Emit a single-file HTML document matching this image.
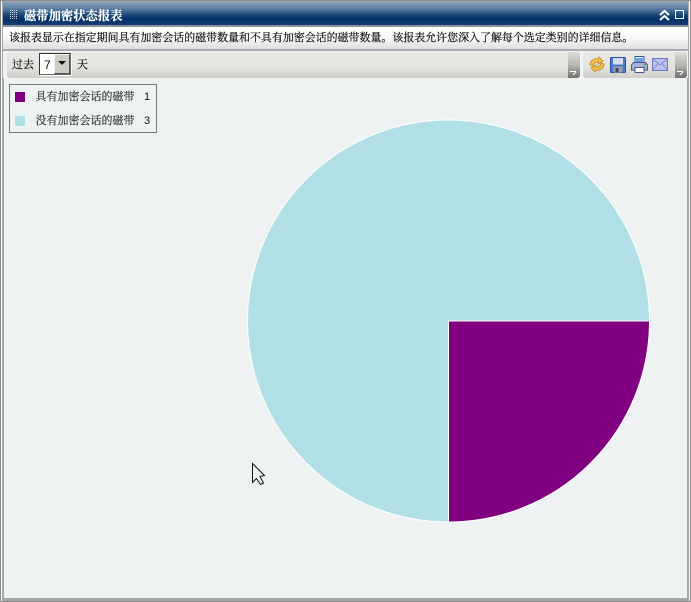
<!DOCTYPE html>
<html lang="zh"><head><meta charset="utf-8">
<style>
html,body{margin:0;padding:0;width:691px;height:602px;overflow:hidden;background:#fff}
body{position:relative;font-family:"Liberation Sans","Noto Serif CJK SC",serif;color:#111}
.a{position:absolute}
.t{position:absolute;white-space:nowrap;line-height:14px;-webkit-text-stroke:.2px currentColor}
</style></head><body>
<div class="a" style="left:0;top:0;width:691px;height:602px;background:#fff"></div>
<div class="a" style="left:0;top:0;width:689px;height:600px;border:1px solid #8a8a8a;background:#fff"></div>
<div class="a" style="left:2px;top:1px;width:683px;height:596px;border:2px solid #a4a6a6;border-top-width:1px;border-bottom-width:3px;background:#eef2f3"></div>
<div class="a" style="left:3px;top:2px;width:685px;height:23px;background:linear-gradient(#8aa2bd 0,#5a7ca3 30%,#1d4877 55%,#033067 75%,#123e73 100%)"></div>
<div class="a" style="left:3px;top:25px;width:685px;height:2px;background:#8e9499"></div>
<svg class="a" style="left:10px;top:10px" width="8" height="10" viewBox="0 0 8 10" fill="#d5dfeb"><rect x="0" y="0" width="1" height="1"/><rect x="2" y="0" width="1" height="1"/><rect x="4" y="0" width="1" height="1"/><rect x="6" y="0" width="1" height="1"/><rect x="0" y="2" width="1" height="1"/><rect x="2" y="2" width="1" height="1"/><rect x="4" y="2" width="1" height="1"/><rect x="6" y="2" width="1" height="1"/><rect x="0" y="4" width="1" height="1"/><rect x="2" y="4" width="1" height="1"/><rect x="4" y="4" width="1" height="1"/><rect x="6" y="4" width="1" height="1"/><rect x="0" y="6" width="1" height="1"/><rect x="2" y="6" width="1" height="1"/><rect x="4" y="6" width="1" height="1"/><rect x="6" y="6" width="1" height="1"/><rect x="0" y="8" width="1" height="1"/><rect x="2" y="8" width="1" height="1"/><rect x="4" y="8" width="1" height="1"/><rect x="6" y="8" width="1" height="1"/></svg>
<div class="t" style="left:24px;top:9px;font-size:12.3px;font-weight:bold;color:#fff">磁带加密状态报表</div>
<svg class="a" style="left:658px;top:9px" width="13" height="13" viewBox="0 0 13 13"><path d="M2 6 L6.500 2 L11 6 M2 11 L6.500 7 L11 11" fill="none" stroke="#fff" stroke-width="2"/></svg>
<div class="a" style="left:675px;top:10px;width:7px;height:7px;border:1.5px solid #fff"></div>
<div class="a" style="left:3px;top:27px;width:685px;height:22px;background:linear-gradient(#fff,#fafafa 45%,#dedede)"></div>
<div class="a" style="left:3px;top:49px;width:685px;height:2px;background:#a9adb0"></div>
<div class="t" style="left:9px;top:31px;font-size:10.96px;color:#111">该报表显示在指定期间具有加密会话的磁带数量和不具有加密会话的磁带数量。该报表允许您深入了解每个选定类别的详细信息。</div>
<div class="a" style="left:3px;top:51px;width:685px;height:27px;background:#eef2f3"></div>
<div class="a" style="left:7px;top:52px;width:573px;height:26px;border-radius:3px;background:linear-gradient(#e9e8e4,#e5e4df 55%,#d0cec7)"></div>
<div class="a" style="left:568px;top:52px;width:12px;height:26px;border-radius:0 3px 3px 0;background:linear-gradient(#dcdbd7,#b5b5b2 50%,#6f6f6f)"></div>
<div class="a" style="left:570px;top:71px;width:6px;height:1px;background:#fff"></div>
<svg class="a" style="left:572px;top:72px" width="5" height="4"><path d="M4 0 L1 3" stroke="#fff" stroke-width="1"/></svg>
<div class="t" style="left:12px;top:58px;font-size:11px">过去</div>
<div class="a" style="left:39px;top:53px;width:30px;height:20px;border:1px solid #333;border-right-color:#666;border-bottom-color:#666;background:#fff;box-shadow:1px 1px 0 #fff"></div>
<div class="t" style="left:44px;top:58px;font-size:12px;color:#111;-webkit-text-stroke:0">7</div>
<div class="a" style="left:54px;top:54px;width:16px;height:20px;background:#d0cdc4;border:1px solid;border-color:#f2f0ea #555 #555 #f2f0ea;box-sizing:border-box"></div>
<div class="a" style="left:58px;top:61px;width:0;height:0;border-left:4px solid transparent;border-right:4px solid transparent;border-top:4px solid #111"></div>
<div class="t" style="left:77px;top:58px;font-size:11px">天</div>
<div class="a" style="left:583px;top:52px;width:104px;height:26px;border-radius:3px;background:linear-gradient(#e9e8e4,#e5e4df 55%,#d0cec7)"></div>
<div class="a" style="left:675px;top:52px;width:12px;height:26px;border-radius:0 3px 3px 0;background:linear-gradient(#dcdbd7,#b5b5b2 50%,#6f6f6f)"></div>
<div class="a" style="left:677px;top:71px;width:6px;height:1px;background:#fff"></div>
<svg class="a" style="left:679px;top:72px" width="5" height="4"><path d="M4 0 L1 3" stroke="#fff" stroke-width="1"/></svg>
<svg class="a" style="left:589px;top:56px" width="16" height="17" viewBox="0 0 16 17"><path d="M1 9 C1 5 5 2 9 3 L10 1 L14 5 L9 8 L9.500 6 C6 5.500 4.500 8 4 10 Z" fill="#f4c048" stroke="#c08a20" stroke-width=".8"/><path d="M15 8 C15 12 11 15 7 14 L6 16 L2 12 L7 9 L6.500 11 C10 11.500 11.500 9 12 7 Z" fill="#f4c048" stroke="#c08a20" stroke-width=".8"/></svg>
<svg class="a" style="left:610px;top:57px" width="16" height="16" viewBox="0 0 16 16"><rect x=".5" y=".5" width="15" height="15" rx="1" fill="#4a7bcf" stroke="#2a4c9c"/><rect x="3" y="1" width="10" height="6.500" fill="#d3dff2"/><rect x="3.500" y="9.500" width="9" height="6" fill="#9a9fad"/><rect x="5.500" y="11" width="3" height="4" fill="#3d4a6c"/></svg>
<svg class="a" style="left:631px;top:56px" width="17" height="17" viewBox="0 0 17 17"><rect x="4" y=".5" width="9" height="7" fill="#eef3fb" stroke="#2f5aa6"/><rect x="5" y="2" width="7" height="4" fill="#69a0de"/><path d="M2.500 6.500 H14.500 L16.500 9 V14 H.5 V9Z" fill="#a9b2d8" stroke="#4b5390"/><rect x="4" y="11.500" width="9" height="5" fill="#fff" stroke="#4b5390"/><rect x="12.500" y="8" width="2.500" height="1.500" fill="#3dbb5a"/></svg>
<svg class="a" style="left:652px;top:58px" width="16" height="13" viewBox="0 0 16 13"><rect x=".5" y=".5" width="15" height="12" fill="#bcc3f2" stroke="#6f78bf"/><path d="M.5 .5 L8 7 L15.500 .5 M.5 12.500 L6 5.500 M15.500 12.500 L10 5.500" fill="none" stroke="#7f88cc"/></svg>
<div class="a" style="left:9px;top:84px;width:146px;height:47px;border:1px solid #777;background:#eef2f3"></div>
<div class="a" style="left:15px;top:92px;width:10px;height:10px;background:#800080"></div>
<div class="a" style="left:15px;top:116px;width:10px;height:10px;background:#b0e0e6"></div>
<div class="t" style="left:35.500px;top:90px;font-size:11px;color:#333">具有加密会话的磁带</div>
<div class="t" style="left:35.500px;top:114px;font-size:11px;color:#333">没有加密会话的磁带</div>
<div class="t" style="left:144px;top:90px;font-size:11px;color:#111;-webkit-text-stroke:0">1</div>
<div class="t" style="left:144px;top:114px;font-size:11px;color:#111;-webkit-text-stroke:0">3</div>
<svg class="a" style="left:0;top:0" width="691" height="602" viewBox="0 0 691 602">
<path d="M448.500 321 V522 A201 201 0 1 1 649.500 321 Z" fill="#b0e0e6" stroke="#fff" stroke-width="1"/>
<path d="M448.500 321 H649.500 A201 201 0 0 1 448.500 522 Z" fill="#800080" stroke="#fff" stroke-width="1"/>
<path d="M252.500 463.500 V482.500 L256.500 478.500 L260.500 484.500 L263.500 483 L260 476.500 L264.500 475.500 Z" fill="#eef2f3" stroke="#111" stroke-width="1"/>
</svg>
</body></html>
